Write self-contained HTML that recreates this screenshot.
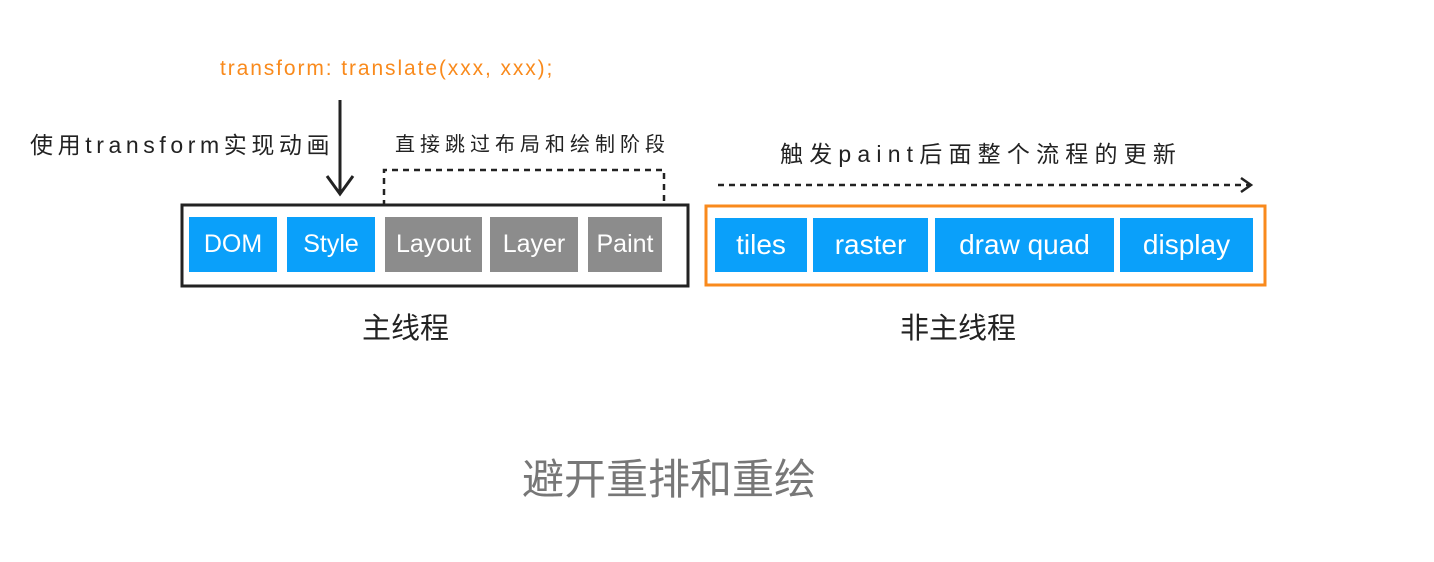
<!DOCTYPE html>
<html><head><meta charset="utf-8"><style>
body{margin:0;width:1434px;height:562px;background:#fff;position:relative;overflow:hidden;font-family:"Liberation Sans","Noto Sans CJK SC",sans-serif}
.a{position:absolute;white-space:nowrap}
.b{position:absolute;color:#fff;font-size:25px;display:flex;align-items:center;justify-content:center}
.bl{background:#0aa0fa}.gr{background:#8c8c8c}
</style></head><body>
<div class="a" style="left:220px;top:57px;font-size:21px;color:#f98a1c;letter-spacing:1.9px">transform: translate(xxx, xxx);</div>
<div class="a" style="left:30px;top:126px;font-size:23px;color:#222;letter-spacing:4.6px">使用transform实现动画</div>
<div class="a" style="left:395px;top:128px;font-size:20px;color:#222;letter-spacing:5px">直接跳过布局和绘制阶段</div>
<div class="a" style="left:780px;top:135px;font-size:23px;color:#222;letter-spacing:6.2px">触发paint后面整个流程的更新</div>
<svg class="a" style="left:0;top:0" width="1434" height="562">
<path d="M340 100 V194 M327 176 L340 194 L353 176" stroke="#222" stroke-width="3" fill="none"/>
<path d="M384 206 V170 H664 V206" stroke="#222" stroke-width="2.5" fill="none" stroke-dasharray="6 5"/>
<path d="M718 185 H1250" stroke="#222" stroke-width="2.5" fill="none" stroke-dasharray="6 5"/>
<path d="M1241 178 L1251 185 L1241 192" stroke="#222" stroke-width="2.5" fill="none"/>
<rect x="182" y="205" width="506" height="81" stroke="#222" stroke-width="3" fill="none"/>
<rect x="706" y="206" width="559" height="79" stroke="#f98a1c" stroke-width="3" fill="none"/>
</svg>
<div class="b bl" style="left:189px;top:217px;width:88px;height:55px">DOM</div>
<div class="b bl" style="left:287px;top:217px;width:88px;height:55px">Style</div>
<div class="b gr" style="left:385px;top:217px;width:97px;height:55px">Layout</div>
<div class="b gr" style="left:490px;top:217px;width:88px;height:55px">Layer</div>
<div class="b gr" style="left:588px;top:217px;width:74px;height:55px">Paint</div>
<div class="b bl" style="left:715px;top:218px;width:92px;height:54px;font-size:28px">tiles</div>
<div class="b bl" style="left:813px;top:218px;width:115px;height:54px;font-size:28px">raster</div>
<div class="b bl" style="left:935px;top:218px;width:179px;height:54px;font-size:28px">draw quad</div>
<div class="b bl" style="left:1120px;top:218px;width:133px;height:54px;font-size:28px">display</div>
<div class="a" style="left:362px;top:305px;font-size:29px;color:#222">主线程</div>
<div class="a" style="left:900px;top:305px;font-size:29px;color:#222">非主线程</div>
<div class="a" style="left:522px;top:446px;font-size:42px;color:#777">避开重排和重绘</div>
</body></html>
